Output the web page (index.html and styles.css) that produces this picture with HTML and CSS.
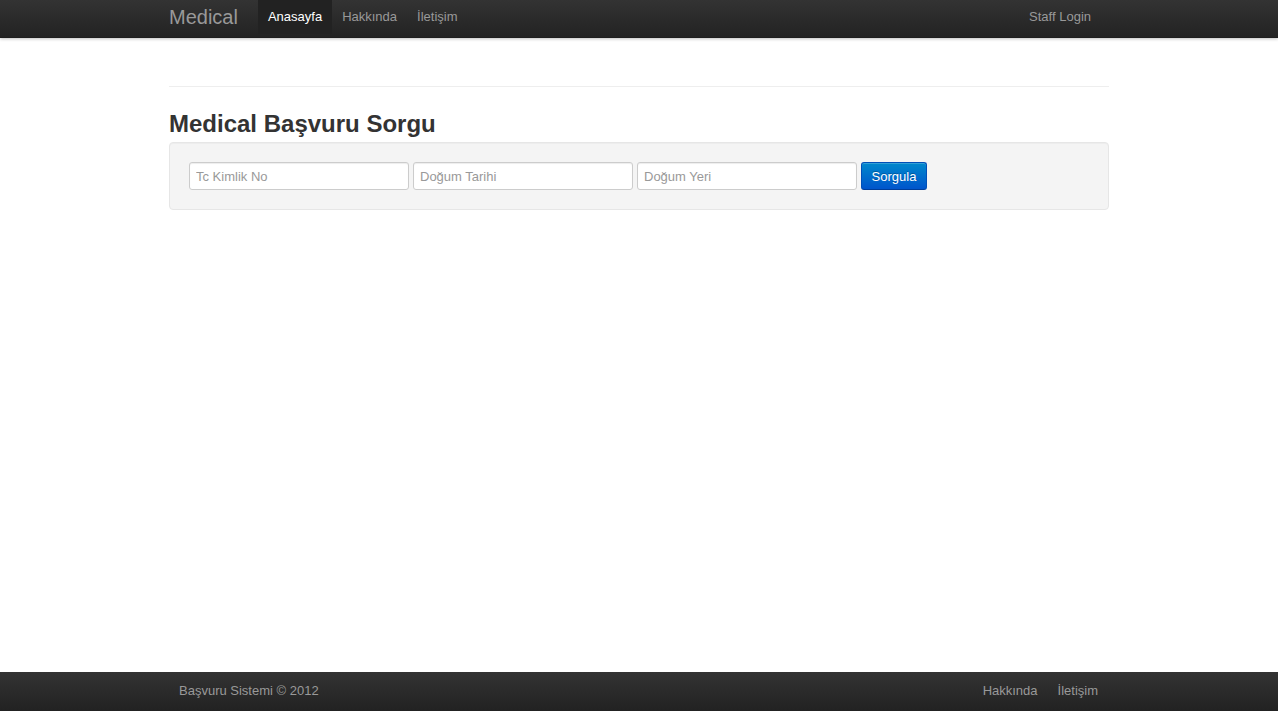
FILE: index.html
```html
<!DOCTYPE html>
<html lang="tr">
<head>
<meta charset="utf-8">
<title>Medical</title>
<link rel="stylesheet" href="styles.css">
</head>
<body>
<div class="navbar">
  <div class="container nav-inner">
    <a class="brand" href="#">Medical</a>
    <ul class="nav">
      <li class="active"><a href="#">Anasayfa</a></li>
      <li><a href="#">Hakkında</a></li>
      <li><a href="#">İletişim</a></li>
    </ul>
    <ul class="nav nav-right">
      <li><a href="#">Staff Login</a></li>
    </ul>
  </div>
</div>
<main class="main">
  <div class="container">
    <hr class="rule">
    <h2 class="title">Medical Başvuru Sorgu</h2>
    <form class="well">
      <input class="field" type="text" placeholder="Tc Kimlik No">
      <input class="field" type="text" placeholder="Doğum Tarihi">
      <input class="field" type="text" placeholder="Doğum Yeri">
      <button class="btn" type="button">Sorgula</button>
    </form>
  </div>
</main>
<footer class="footer">
  <div class="container foot-inner">
    <span class="copy">Başvuru Sistemi © 2012</span>
    <div class="foot-links">
      <a href="#">Hakkında</a>
      <a href="#">İletişim</a>
    </div>
  </div>
</footer>
</body>
</html>
```
FILE: styles.css
```css
* { box-sizing: border-box; }
html, body { height: 100%; }
body {
  margin: 0;
  font-family: "Liberation Sans", Arial, Helvetica, sans-serif;
  font-size: 13px;
  line-height: 18px;
  color: #333;
  background: #fff;
  display: flex;
  flex-direction: column;
}
a { text-decoration: none; }
.container { width: 940px; margin: 0 auto; }

.navbar {
  height: 38px;
  background: linear-gradient(#333333, #222222);
  box-shadow: 0 1px 3px rgba(0,0,0,.25), 0 -1px 0 rgba(0,0,0,.1) inset;
  flex: none;
  position: relative;
  z-index: 2;
}
.nav-inner { display: flex; align-items: stretch; height: 38px; }
.brand {
  font-size: 20px;
  line-height: 34px;
  color: #999;
  padding-right: 20px;
}
.nav { list-style: none; margin: 0; padding: 0; display: flex; }
.nav li a {
  display: block;
  padding: 0 10px;
  line-height: 34px;
  color: #999;
}
.nav li.active a { background: #222; color: #fff; }
.nav-right { margin-left: auto; margin-right: 8px; }

.main { flex: 1; }
.rule {
  margin: 48px 0 0;
  height: 0;
  border: 0;
  border-top: 1px solid #eee;
  border-bottom: 1px solid #fff;
}
.title {
  margin: 18px 0 0;
  font-size: 24px;
  line-height: 36px;
  font-weight: bold;
  color: #333;
}
.well {
  margin: 0;
  padding: 19px;
  background: #f4f4f4;
  border: 1px solid #e6e6e6;
  border-radius: 4px;
  box-shadow: inset 0 1px 1px rgba(0,0,0,.03);
  display: flex;
  gap: 4px;
  height: 68px;
}
.field {
  width: 220px;
  height: 28px;
  padding: 4px 6px;
  font-family: inherit;
  font-size: 13px;
  line-height: 18px;
  color: #555;
  background: #fff;
  border: 1px solid #ccc;
  border-radius: 3px;
  box-shadow: inset 0 1px 1px rgba(0,0,0,.075);
}
.field::placeholder { color: #999; }
.btn {
  height: 28px;
  width: 66px;
  padding: 0;
  font-family: inherit;
  font-size: 13px;
  color: #fff;
  background: linear-gradient(#0088cc, #0055cc);
  border: 1px solid #0050b8;
  border-bottom-color: #003d99;
  border-radius: 3px;
  text-shadow: 0 -1px 0 rgba(0,0,0,.25);
  box-shadow: inset 0 1px 0 rgba(255,255,255,.2);
}

.footer {
  flex: none;
  height: 39px;
  background: linear-gradient(#333333, #222222);
}
.foot-inner {
  display: flex;
  justify-content: space-between;
  align-items: center;
  height: 37px;
  padding: 0 11px 0 10px;
  color: #999;
}
.foot-links { display: flex; gap: 20px; }
.foot-links a { color: #999; }
```
